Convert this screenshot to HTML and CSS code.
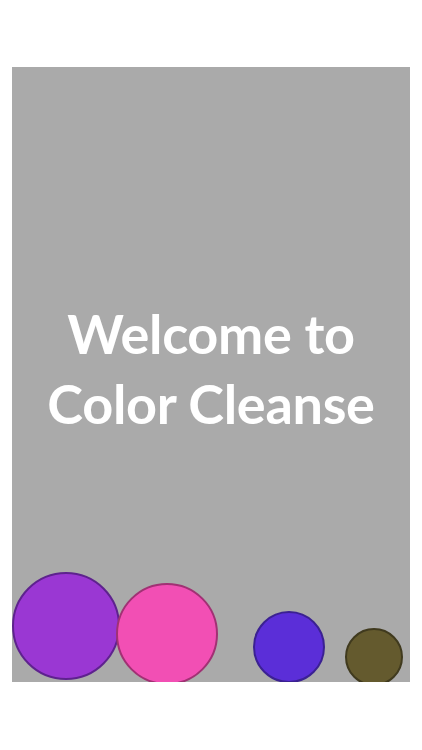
FILE: index.html
```html
<!DOCTYPE html>
<html lang="en">
<head>
<meta charset="utf-8">
<title>Color Cleanse</title>
<link rel="stylesheet" href="styles.css">
</head>
<body>
<main class="screen">
  <section class="panel">
    <h1 class="title">Welcome to<br>Color Cleanse</h1>
    <div class="bubble bubble-purple"></div>
    <div class="bubble bubble-pink"></div>
    <div class="bubble bubble-blue"></div>
    <div class="bubble bubble-olive"></div>
  </section>
</main>
</body>
</html>
```
FILE: styles.css
```css
html, body {
  margin: 0;
  padding: 0;
  background: #ffffff;
}
.screen {
  width: 422px;
  height: 750px;
  padding: 67px 0 0 12px;
  box-sizing: border-box;
}
.panel {
  position: relative;
  width: 398px;
  height: 615px;
  background: #aaaaaa;
  overflow: hidden;
  display: flex;
  align-items: center;
  justify-content: center;
}
.title {
  margin: 0 0 12px 0;
  font-family: Lato, "Open Sans", sans-serif;
  font-weight: 700;
  font-size: 54px;
  letter-spacing: -0.3px;
  line-height: 70px;
  color: #ffffff;
  text-align: center;
}
.bubble {
  position: absolute;
  border-radius: 50%;
  box-sizing: border-box;
  border: 2px solid;
}
.bubble-purple {
  left: 0;
  top: 505px;
  width: 108px;
  height: 108px;
  background: #9a37d3;
  border-color: #5e228e;
}
.bubble-pink {
  left: 104px;
  top: 516px;
  width: 102px;
  height: 102px;
  background: #f24fb4;
  border-color: #a13174;
}
.bubble-blue {
  left: 241px;
  top: 544px;
  width: 72px;
  height: 72px;
  background: #5b2ed8;
  border-color: #3b2192;
}
.bubble-olive {
  left: 333px;
  top: 561px;
  width: 58px;
  height: 58px;
  background: #645a2e;
  border-color: #403a1e;
}
```
